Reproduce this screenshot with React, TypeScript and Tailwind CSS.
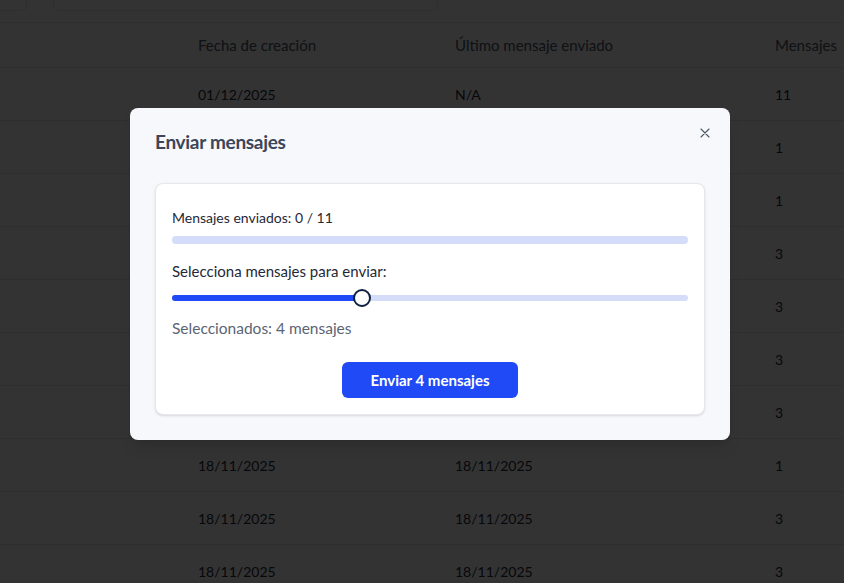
import React from "react";

const rows = [
  ["01/12/2025", "N/A", "11"],
  ["25/11/2025", "25/11/2025", "1"],
  ["24/11/2025", "24/11/2025", "1"],
  ["20/11/2025", "20/11/2025", "3"],
  ["20/11/2025", "20/11/2025", "3"],
  ["19/11/2025", "19/11/2025", "3"],
  ["19/11/2025", "19/11/2025", "3"],
  ["18/11/2025", "18/11/2025", "1"],
  ["18/11/2025", "18/11/2025", "3"],
  ["18/11/2025", "18/11/2025", "3"],
];

export default function App() {
  return (
    <div
      className="relative h-[583px] w-[844px] overflow-hidden bg-white text-gray-800"
      style={{ fontFamily: "Lato, 'Noto Sans', sans-serif" }}
    >
      {/* filters row (scrolled off the top) */}
      <div className="-mt-[30px] flex gap-[26px] pl-0">
        <div className="-ml-[100px] h-[41px] w-[127px] shrink-0 rounded-md border border-gray-200" />
        <div className="h-[41px] w-[385px] shrink-0 rounded-md border border-gray-200" />
      </div>
      {/* table */}
      <div className="mt-[11px] border-t border-gray-200">
        <div className="flex h-[45px] items-center border-b border-gray-200 text-[15px] text-gray-600">
          <div className="w-[182px] shrink-0" />
          <div className="w-[257px] shrink-0 px-4">Fecha de creación</div>
          <div className="w-[320px] shrink-0 px-4">Último mensaje enviado</div>
          <div className="shrink-0 whitespace-nowrap px-4">Mensajes</div>
        </div>
        {rows.map((r, i) => (
          <div key={i} className="flex h-[53px] items-center border-b border-gray-200 text-[14px] text-gray-800">
            <div className="w-[182px] shrink-0" />
            <div className="w-[257px] shrink-0 px-4">{r[0]}</div>
            <div className="w-[320px] shrink-0 px-4">{r[1]}</div>
            <div className="shrink-0 px-4">{r[2]}</div>
          </div>
        ))}
      </div>

      {/* overlay */}
      <div className="absolute inset-0 bg-black/80" />

      {/* modal */}
      <div className="absolute left-[130px] top-[108px] w-[600px] rounded-lg bg-[#f7f8fc] px-[25px] pb-[25px] pt-[19px] shadow-lg">
        <div className="relative">
          <h2 className="mt-[1px] text-[19px] font-bold leading-7 tracking-[-0.3px] text-[#3b4658]">Enviar mensajes</h2>
          <button className="absolute -right-[10px] -top-[5px] p-1 text-[#4b5563]">
            <svg width="12" height="12" viewBox="0 0 24 24" fill="none" stroke="currentColor" strokeWidth="2.2" strokeLinecap="round">
              <path d="M20 4 4 20M4 4l16 16" />
            </svg>
          </button>
        </div>
        <div className="mt-[27px] rounded-lg border border-gray-200 bg-white px-4 pb-[16px] pt-[24px] shadow-sm">
          <div className="text-[14px] leading-5 text-[#1f2937]">Mensajes enviados: 0 / 11</div>
          <div className="mt-[8px] h-[8px] w-full rounded-full bg-[#d4dcfa]" />
          <div className="mt-[17px] text-[15px] leading-5 text-[#1f2937]">Selecciona mensajes para enviar:</div>
          <div className="relative mt-[8px] flex h-[18px] items-center">
            <div className="h-[6px] w-full rounded-full bg-[#d4dcfa]" />
            <div className="absolute left-0 h-[6px] w-[190px] rounded-l-full bg-[#1f4af5]" />
            <div className="absolute left-[181px] h-[18px] w-[18px] rounded-full border-2 border-[#0f1f3d] bg-white" />
          </div>
          <div className="mt-[11px] text-[15.5px] leading-5 text-[#5b6474]">Seleccionados: 4 mensajes</div>
          <div className="mt-[24px] flex justify-center">
            <button className="h-[36px] w-[176px] rounded-md bg-[#1f4af5] text-[15px] font-bold text-white">
              Enviar 4 mensajes
            </button>
          </div>
        </div>
      </div>
    </div>
  );
}
